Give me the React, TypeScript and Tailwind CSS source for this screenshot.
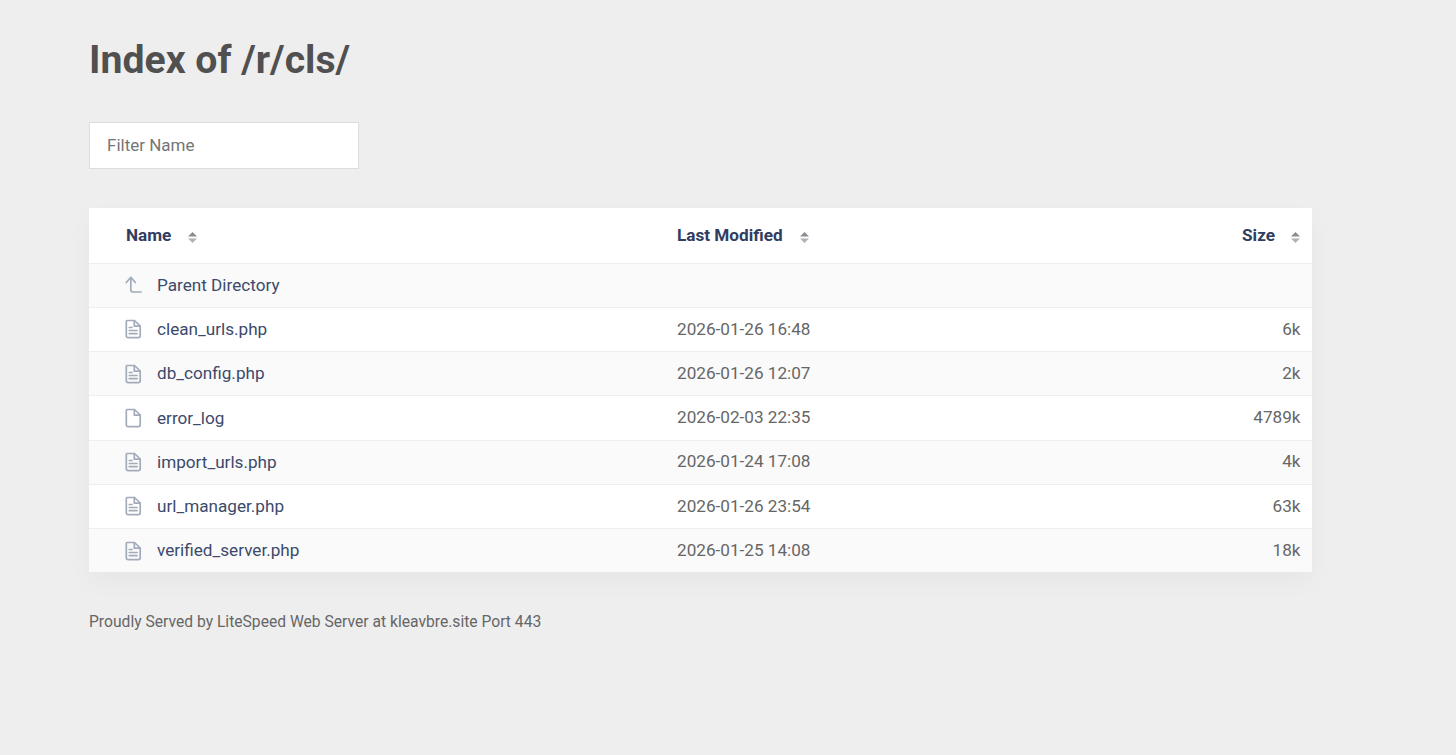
const rows = [
  { name: "clean_urls.php", date: "2026-01-26 16:48", size: "6k", icon: "text" },
  { name: "db_config.php", date: "2026-01-26 12:07", size: "2k", icon: "text" },
  { name: "error_log", date: "2026-02-03 22:35", size: "4789k", icon: "blank" },
  { name: "import_urls.php", date: "2026-01-24 17:08", size: "4k", icon: "text" },
  { name: "url_manager.php", date: "2026-01-26 23:54", size: "63k", icon: "text" },
  { name: "verified_server.php", date: "2026-01-25 14:08", size: "18k", icon: "text" },
];

function SortIcon() {
  return (
    <svg width="9" height="13" viewBox="0 0 9 13" className="shrink-0 mt-[2px]">
      <path d="M4.5 1 L9 5.6 H0 Z" fill="#8a8d92" />
      <path d="M4.5 12 L9 7.4 H0 Z" fill="#b0b2b6" />
    </svg>
  );
}

function FileIcon({ lines }: { lines: boolean }) {
  return (
    <svg width="18" height="20" viewBox="0 0 18 20" fill="none" stroke="#a3abbb" strokeWidth="1.7" strokeLinejoin="round" strokeLinecap="round">
      <path d="M3.3 1.5 H10.5 L16.2 7 V16.8 A1.8 1.8 0 0 1 14.4 18.6 H4.1 A1.8 1.8 0 0 1 2.3 16.8 V2.5 A1 1 0 0 1 3.3 1.5 Z" />
      <path d="M10.3 1.6 V7.2 H16" />
      {lines && <path d="M5.3 8.5 H8 M5.3 11.5 H13 M5.3 14.7 H13" />}
    </svg>
  );
}

function ParentIcon() {
  return (
    <svg width="18" height="20" viewBox="0 0 18 20" fill="none" stroke="#a3abbb" strokeWidth="1.7" strokeLinejoin="round" strokeLinecap="round">
      <path d="M2.3 7.5 L6.8 2.3 L11.3 7.5" />
      <path d="M6.8 2.5 V15 A2.5 2.5 0 0 0 9.3 17 H17" />
    </svg>
  );
}

function Row({ name, date, size, icon, odd }: { name: string; date: string; size: string; icon: React.ReactNode; odd: boolean }) {
  return (
    <div className={`grid grid-cols-[588px_1fr_auto] items-center h-[44.25px] border-t border-[#eeeeee] pr-[11.5px] text-[17.15px] ${odd ? "bg-[#fafafa]" : "bg-white"}`}>
      <div className="flex items-center pl-[35px] gap-[15px]">
        {icon}
        <span className="text-[#3c4a6b] mt-px">{name}</span>
      </div>
      <div className="text-[#666666]">{date}</div>
      <div className="text-[#666666]">{size}</div>
    </div>
  );
}

export default function App() {
  return (
    <div className="min-h-[755px] bg-[#eeeeee] pl-[89px] pr-[144px] pt-[37px] font-['Roboto',sans-serif]">
      <h1 className="text-[39.2px] leading-[46px] font-bold text-[#505050]">Index of /r/cls/</h1>
      <input
        placeholder="Filter Name"
        className="block mt-[39px] w-[270px] h-[47px] bg-white border border-[#dddddd] px-[17px] pb-[2px] text-[17px] text-[#666666] placeholder:text-[#757575] outline-none"
      />
      <div className="mt-[39px] bg-white shadow-[0_10px_24px_rgba(0,0,0,0.035)]">
        <div className="grid grid-cols-[588px_1fr_auto] items-center h-[54.5px] pt-[2px] pr-[12px] text-[17.15px] font-bold text-[#2f3d60]">
          <div className="flex items-center pl-[37px] gap-[17px]">
            <span>Name</span>
            <SortIcon />
          </div>
          <div className="flex items-center gap-[17px]">
            <span>Last Modified</span>
            <SortIcon />
          </div>
          <div className="flex items-center gap-[16px]">
            <span>Size</span>
            <SortIcon />
          </div>
        </div>
        <Row name="Parent Directory" date="" size="" icon={<ParentIcon />} odd />
        {rows.map((r, i) => (
          <Row key={r.name} name={r.name} date={r.date} size={r.size} icon={<FileIcon lines={r.icon === "text"} />} odd={i % 2 === 1} />
        ))}
      </div>
      <p className="mt-[40px] text-[15.65px] leading-[20px] text-[#666666]">Proudly Served by LiteSpeed Web Server at kleavbre.site Port 443</p>
    </div>
  );
}
